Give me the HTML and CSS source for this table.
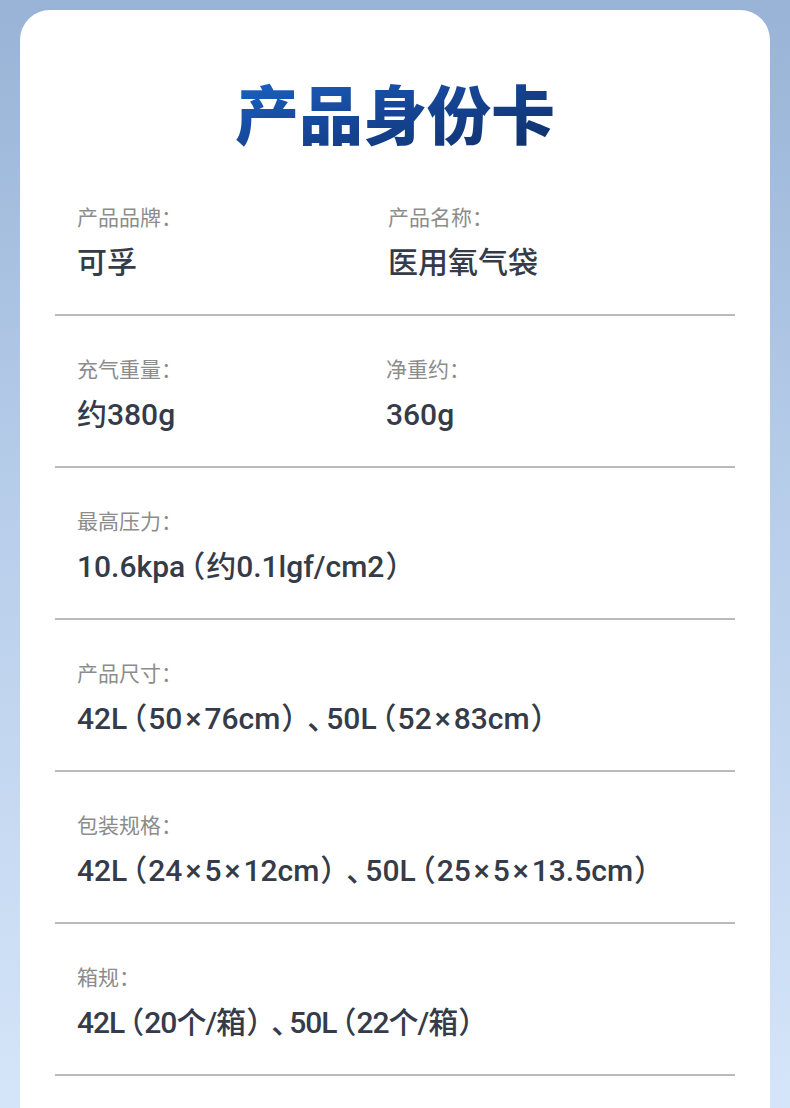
FILE: index.html
```html
<!DOCTYPE html>
<html lang="zh-CN">
<head>
<meta charset="utf-8">
<link rel="stylesheet" href="styles.css">
</head>
<body>
<div class="page">
  <div class="card">
    <h1 class="title">产品身份卡</h1>
    <div class="row">
      <div class="cell half"><div class="label">产品品牌：</div><div class="value">可孚</div></div>
      <div class="cell"><div class="label">产品名称：</div><div class="value">医用氧气袋</div></div>
    </div>
    <div class="row">
      <div class="cell half shift"><div class="label">充气重量：</div><div class="value">约380g</div></div>
      <div class="cell"><div class="label">净重约：</div><div class="value">360g</div></div>
    </div>
    <div class="row">
      <div class="cell"><div class="label">最高压力：</div><div class="value">10.6kpa<span class="pl">（</span>约0.1lgf/cm2<span class="pr">）</span></div></div>
    </div>
    <div class="row">
      <div class="cell"><div class="label">产品尺寸：</div><div class="value">42L<span class="pl">（</span>50<span class="x">×</span>76cm<span class="pr">）</span><span class="dun">、</span>50L<span class="pl">（</span>52<span class="x">×</span>83cm<span class="pr">）</span></div></div>
    </div>
    <div class="row">
      <div class="cell"><div class="label">包装规格：</div><div class="value">42L<span class="pl">（</span>24<span class="x">×</span>5<span class="x">×</span>12cm<span class="pr">）</span><span class="dun">、</span>50L<span class="pl">（</span>25<span class="x">×</span>5<span class="x">×</span>13.5cm<span class="pr">）</span></div></div>
    </div>
    <div class="row">
      <div class="cell"><div class="label">箱规：</div><div class="value narrow">42L<span class="pl">（</span>20个/箱<span class="pr">）</span><span class="dun">、</span>50L<span class="pl">（</span>22个/箱<span class="pr">）</span></div></div>
    </div>
  </div>
</div>
</body>
</html>
```
FILE: styles.css
```css
html, body {
  margin: 0;
  padding: 0;
}
body {
  width: 790px;
  height: 1108px;
  overflow: hidden;
  font-family: "Roboto", "Noto Sans CJK SC", sans-serif;
}
.page {
  height: 1108px;
  padding: 10px 20px 0;
  box-sizing: border-box;
  background: linear-gradient(180deg, #98b3d6 0%, #b4cbe8 40%, #d5e5f9 100%);
}
.card {
  background: #fff;
  border-radius: 30px 30px 0 0;
  height: 1098px;
  padding: 0 35px;
  box-sizing: border-box;
}
.title {
  margin: 0;
  padding-top: 66px;
  height: 154px;
  box-sizing: border-box;
  text-align: center;
  font-family: "Noto Sans CJK SC", sans-serif;
  font-weight: 900;
  font-size: 64px;
  line-height: 70px;
  background: linear-gradient(165deg, #1d70d8 25%, #16479a 55%, #0e2c5f 85%);
  -webkit-background-clip: text;
  background-clip: text;
  color: transparent;
}
.row {
  display: flex;
  border-bottom: 2px solid #bababa;
  height: 152px;
  box-sizing: border-box;
  padding: 38px 0 0 22px;
}
.cell {
  display: flex;
  flex-direction: column;
  gap: 18px;
  flex: 1;
}
.half {
  flex: 0 0 311px;
}
.shift {
  flex-basis: 309px;
}
.label {
  font-size: 21px;
  line-height: 28px;
  color: #8c8c8c;
  font-family: "Noto Sans CJK TC", sans-serif;
}
.value {
  font-size: 30px;
  line-height: 30px;
  color: #353b48;
  font-weight: 500;
  font-feature-settings: "halt";
  white-space: nowrap;
}
.pl {
  margin-left: 5px;
  margin-right: 1px;
}
.pr {
  margin-left: 1px;
  margin-right: 4px;
}
.dun {
  margin-left: 7px;
  margin-right: 4px;
}
.x {
  margin: 0 3px;
}
.narrow {
  letter-spacing: -1px;
}
```
